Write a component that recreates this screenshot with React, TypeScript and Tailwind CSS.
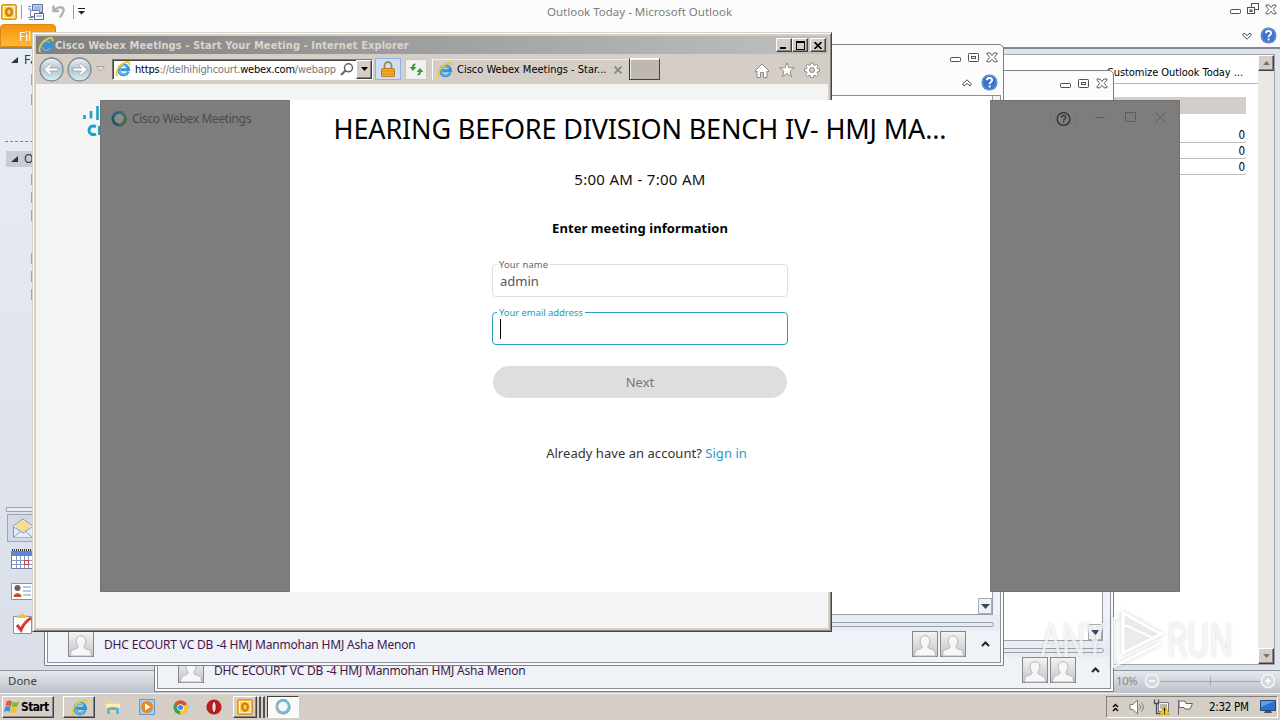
import type { ReactNode } from 'react';
import clsx from 'clsx';

const raised =
  'border border-t-white border-l-white border-r-[#404040] border-b-[#404040] shadow-[inset_-1px_-1px_0_#8a8580] bg-[#d5cec7]';

function IeLogo({ size = 16 }: { size?: number }) {
  return (
    <svg width={size} height={size} viewBox="0 0 16 16" fill="none">
      <path d="M13.2 10.8A5 5 0 1 1 13.6 8.8H5.5" stroke="#3394d8" strokeWidth="2.9" />
      <path d="M12.6 10.8A4.6 4.6 0 0 1 3.900 9.500M4.500 6.500A4.500 4.500 0 0 1 12 5.800" stroke="#7fcdf4" strokeWidth="1" />
      <path d="M2.6 14.900C-1 13.500 3.500 3.500 11 1.200c3-.8 4.200.8 3.300 3" stroke="#f0ca2a" strokeWidth="1.800" />
    </svg>
  );
}

function WebexBall({ size = 16, dim = false }: { size?: number; dim?: boolean }) {
  return (
    <svg width={size} height={size} viewBox="0 0 16 16">
      <circle cx="8" cy="8" r="7.6" fill={dim ? '#2f5360' : '#8fb5b8'} />
      <path d="M8 .4a7.6 7.6 0 0 1 0 15.2z" fill={dim ? '#4c6750' : '#6fb9c8'} />
      <path d="M1.5 5A7.5 7.5 0 0 1 12 1.6" stroke={dim ? '#2b6f8e' : '#67b6dc'} strokeWidth="1.6" fill="none" />
      <circle cx="8" cy="7.6" r="4.8" fill={dim ? '#8c8e8e' : '#eef8fa'} />
    </svg>
  );
}

function HelpBall() {
  return (
    <svg width="17" height="17" viewBox="0 0 17 17">
      <circle cx="8.5" cy="8.5" r="8" fill="#3f74c9" />
      <circle cx="8.5" cy="8.5" r="7" fill="none" stroke="#6d9be0" />
      <path d="M5.9 6.3c.2-3.3 5.4-3 5.2 0-.1 1.8-2.5 1.7-2.5 3.9M8.6 11.6v2" stroke="#fff" strokeWidth="1.9" fill="none" />
    </svg>
  );
}

function OutlookLogo() {
  return (
    <svg width="16" height="16" viewBox="0 0 16 16">
      <rect x=".5" y=".5" width="15" height="15" rx="1.5" fill="#f4b52c" stroke="#d59a2a" />
      <rect x="2.5" y="2.5" width="11" height="11" fill="#fbd35e" stroke="#fff0bd" />
      <ellipse cx="8" cy="8" rx="2.8" ry="3.7" fill="none" stroke="#cf7a10" strokeWidth="2.2" />
    </svg>
  );
}

function CaptionMin() {
  return (
    <svg width="11" height="11" viewBox="0 0 11 11" fill="#fff" stroke="#4a4e58">
      <rect x=".5" y="5.5" width="10" height="4" rx=".8" />
    </svg>
  );
}

function CaptionMax() {
  return (
    <svg width="11" height="11" viewBox="0 0 11 11" fill="#fff" stroke="#4a4e58">
      <rect x=".5" y="1.5" width="10" height="8" rx=".8" />
      <rect x="3.5" y="4.5" width="4" height="2" />
    </svg>
  );
}

function CaptionRestore() {
  return (
    <svg width="12" height="12" viewBox="0 0 12 12" fill="#fff" stroke="#4a4e58">
      <rect x="4.5" y=".5" width="7" height="6" />
      <rect x=".5" y="4.5" width="7" height="6" />
      <rect x="3" y="7" width="2" height="1.5" />
    </svg>
  );
}

function CaptionClose() {
  return (
    <svg width="12" height="11" viewBox="0 0 12 11" fill="#fff" stroke="#4a4e58" strokeWidth=".9">
      <path d="M1 1h3l2 2.5L8 1h3v1L8.3 5.3 11 8.8v1H8L6 7.3 4 9.8H1v-1l2.7-3.5L1 2z" />
    </svg>
  );
}

function Chevron({ flip = false }: { flip?: boolean }) {
  return (
    <svg width="10" height="8" viewBox="0 0 10 8" className={clsx(flip && 'rotate-180')}>
      <path d="M5 .8 9.3 5 8 7 5 4.5 2 7 .7 5z" fill="#fff" stroke="#4a4e58" />
    </svg>
  );
}

function Person() {
  return (
    <svg width="26" height="26" viewBox="0 0 26 26">
      <defs>
        <linearGradient id="person" x1="0" y1="0" x2="0" y2="1">
          <stop offset="0" stopColor="#f4f4f4" />
          <stop offset="1" stopColor="#c4c4c6" />
        </linearGradient>
      </defs>
      <rect x=".5" y=".5" width="25" height="25" fill="url(#person)" stroke="#85888d" />
      <path
        d="M2.5 25c0-5 1.5-6 5-7 2-.6 2.800-1.200 2.500-3-2-2.500-2-4-1.700-6.500.8-5 8.600-5 9.400 0 .3 2.500.3 4-1.700 6.500-.3 1.800.5 2.400 2.500 3 3.500 1 5 2 5 7z"
        fill="#f7f7f8"
        stroke="#b3b5b8"
      />
    </svg>
  );
}

function ScrollArrow({ up = false }: { up?: boolean }) {
  return (
    <div className={clsx('flex size-4 items-center justify-center', raised)}>
      <svg width="7" height="4" viewBox="0 0 7 4" className={clsx(!up && 'rotate-180')}>
        <path d="M3.5 0 7 4H0z" fill="#77736e" />
      </svg>
    </div>
  );
}

/* Outlook message window that sits behind the browser */
function MessageWindow({ className }: { className: string }) {
  return (
    <div className={clsx('absolute flex h-[622px] w-[960px] flex-col rounded-t-[5px] border border-[#7b8088] bg-[#fcfcfd]', className)}>
      <div className="flex h-[25px] items-center justify-end gap-[7px] pr-[5px]">
        <CaptionMin />
        <CaptionMax />
        <CaptionClose />
      </div>
      <div className="flex h-[25px] items-center justify-end gap-[9px] pr-[5px]">
        <Chevron />
        <HelpBall />
      </div>
      <div className="mx-[2px] mb-[2px] flex flex-1 flex-col border border-[#8b9099] bg-[#eff2f6]">
        <div className="mr-[7px] flex flex-1 items-end justify-end border-r border-b border-[#9a9fa8] bg-white">
          <div className="flex h-4 w-[14px] items-center justify-center border border-[#a9b0ac] bg-[#eef2f7]">
            <svg width="9" height="5" viewBox="0 0 9 5">
              <path d="M0 0h9L4.5 5z" fill="#3a4763" />
            </svg>
          </div>
        </div>
        <div className="flex h-4 items-start bg-[#e8edf3] pt-[7px] pr-[6px]">
          <div className="h-[5px] flex-1 rounded-r-sm border border-[#999fa8] bg-[#e6eaf1]" />
        </div>
        <div className="flex h-[31px] items-start pr-[10px] pl-[20px]">
          <Person />
          <span className="ml-[10px] font-['Noto_Sans','Open_Sans',sans-serif] text-[12px] leading-[27px] tracking-[-0.18px] whitespace-nowrap text-[#43164b]">
            DHC ECOURT VC DB -4 HMJ Manmohan HMJ Asha Menon
          </span>
          <div className="ml-auto flex gap-[2px]">
            <Person />
            <Person />
          </div>
          <svg width="9" height="6" viewBox="0 0 9 6" className="mt-[10px] ml-[15px]">
            <path d="M1 5l3.5-3.5L8 5" fill="none" stroke="#20242c" strokeWidth="2" />
          </svg>
        </div>
      </div>
    </div>
  );
}

function NavStub({ className }: { className: string }) {
  return <div className={clsx('ml-[31px] h-[11px] w-[2px] bg-[#a2a5aa]', className)} />;
}

function NavHeading({ children, active = false }: { children: ReactNode; active?: boolean }) {
  return (
    <div className={clsx('ml-[6px] flex h-4 items-center pl-[5px] text-[12px] text-[#333]', active && 'bg-[#c7ccd6]')}>
      <svg width="8" height="7" viewBox="0 0 8 7">
        <path d="M7 0v6H0z" fill="#333" />
      </svg>
      <span className="ml-[5px]">{children}</span>
    </div>
  );
}

function OutlookWindow() {
  return (
    <div className="absolute inset-x-0 top-0 flex h-[694px] flex-col overflow-hidden bg-[#fcfcfd] font-['Noto_Sans','Open_Sans',sans-serif]">
      <div className="flex h-6 shrink-0 items-center pr-[3px] pb-px pl-px">
        <OutlookLogo />
        <div className="ml-1 h-[14px] w-px bg-[#9b9b9b]" />
        <svg width="16" height="16" viewBox="0 0 16 16" className="ml-[6px]">
          <path d="M4.5.5h10v8h-10z" fill="#c9d8f0" stroke="#5c7197" />
          <path d="M6 3h7M6 5h7" stroke="#7f9bc9" />
          <path d="M2.5 6.500h9v6h-9z" fill="#fff" stroke="#6f87b0" />
          <path d="M6.500 9.500h9v6h-9z" fill="#fff" stroke="#4f638b" />
          <path d="M8 12h6M0 2.500h3M0 5h3M0 13.500h5M1 15.500h4M13 7.500h2" fill="none" stroke="#6f87b0" />
        </svg>
        <svg width="13" height="13" viewBox="0 0 13 13" className="ml-[8px]" fill="none" stroke="#b0b0b0" strokeWidth="2.4">
          <path d="M1.500.5v5.500H7M2 5.500c2.500-3.500 8.500-4.500 9.500-1 .6 3-1.500 4-3.500 8" />
        </svg>
        <div className="ml-[8px] h-[14px] w-px bg-[#9b9b9b]" />
        <svg width="7" height="7" viewBox="0 0 7 7" className="ml-1">
          <path d="M0 0h7v1H0zM0 3h7L3.5 6.5z" fill="#222" />
        </svg>
        <span className="ml-[462px] text-[11.5px] whitespace-nowrap text-[#7d7d7d]">
          Outlook Today - Microsoft Outlook
        </span>
        <div className="ml-auto flex items-center gap-[6px] pb-[5px]">
          <CaptionMin />
          <CaptionRestore />
          <CaptionClose />
        </div>
      </div>
      <div className="flex h-[23px] shrink-0 items-start justify-between pr-[3px]">
        <div className="h-[23px] w-14 rounded-t-[4px] border border-[#d98a14] bg-linear-to-b from-[#f4940c] to-[#ffb733] pl-[18px] text-[12px] leading-[23px] text-white">
          File
        </div>
        <div className="mt-[3px] flex items-center gap-2">
          <Chevron flip />
          <HelpBall />
        </div>
      </div>
      <div className="h-[2px] shrink-0 bg-[#858b92]" />
      <div className="flex flex-1 bg-[#dfe4eb]">
        <div className="flex w-[154px] flex-col bg-linear-to-b from-[#e9edf3] to-[#d9dee8] pt-[3px]">
          <NavHeading>Favorites</NavHeading>
          <NavStub className="mt-[6px]" />
          <NavStub className="mt-[9px]" />
          <div className="mt-[36px] ml-[5px] border-t border-dashed border-[#7f858e]" />
          <div className="h-[9px]" />
          <NavHeading active>Outlook</NavHeading>
          <NavStub className="mt-[7px]" />
          <NavStub className="mt-[7px]" />
          <NavStub className="mt-[7px]" />
          <NavStub className="mt-[32px]" />
          <NavStub className="mt-[7px]" />
          <NavStub className="mt-[7px]" />
          <div className="mt-[207px] ml-[6px] h-[5px] border border-[#9ea4af] bg-[#e9edf3]" />
          <div className="mt-[2px] ml-[7px] flex h-7 items-center border border-[#9ea4af] bg-[#d3d9e5] pl-[5px]">
            <svg width="20" height="20" viewBox="0 0 20 20">
              <path d="M.5 8 10 1l9.5 7v11H.5z" fill="#f4f8fd" stroke="#7e95b8" />
              <path d="M3 7 10 2l7 5v4l-7 4-7-4z" fill="#f8dc92" />
              <path d="m1 9 9 6 9-6v10H1z" fill="#e3eefa" />
              <path d="m1 19 7-6m11 6-7-6M1 9l9 6 9-6" fill="none" stroke="#7e9fcf" />
            </svg>
          </div>
          <svg width="22" height="20" viewBox="0 0 22 20" className="mt-[7px] ml-[11px]">
            <path d="M.5 2.5h21v17H.5z" fill="#fff" stroke="#6d7fae" />
            <path d="M1 3h20v4H1z" fill="#5b8ad4" />
            <path d="M1 11.5h20M1 15.5h20M5.5 7v12M9.5 7v12M13.5 7v12M17.5 7v12" stroke="#8598c7" />
            <path d="M13.5 11.5h4v4h-4z" fill="none" stroke="#c83a34" />
            <path d="M1 1h20" stroke="#333" strokeWidth="2" strokeDasharray="1 1" />
          </svg>
          <svg width="22" height="18" viewBox="0 0 22 18" className="mt-[14px] ml-[11px]">
            <path d="M.5.5h21v16H.5z" fill="#fff" stroke="#8793ac" />
            <path d="M12 4h8M12 8h8M12 12h8" stroke="#6e92d4" />
            <circle cx="6.5" cy="5" r="3" fill="#6e605a" />
            <path d="M2.5 14c0-5 8-5 8 0z" fill="#c24c2c" />
          </svg>
          <svg width="19" height="21" viewBox="0 0 19 21" className="mt-[12px] ml-[13px]">
            <path d="M.5 3.5h18v17H.5z" fill="#fff" stroke="#8793ac" />
            <path d="M4 2h3l2-2 2 2h3v3H4z" fill="#ecc24a" />
            <path d="m4 12 4 5c2-5 5-9 10-12" fill="none" stroke="#dc3a30" strokeWidth="3" />
          </svg>
        </div>
        <div className="mt-[5px] mr-[5px] mb-[5px] flex flex-1 border border-[#a0a5ad] bg-white">
          <div className="flex flex-1 flex-col">
            <div className="flex h-[29px] items-center justify-end border-b border-[#b9b5b1] pt-[8px] pr-[15px] font-['DejaVu_Sans_Condensed','DejaVu_Sans',sans-serif] text-[11px] tracking-[-0.06px] text-black">
              <span className="underline">C</span>ustomize Outlook Today ...
            </div>
            <div className="mt-[13px] mr-[12px] h-[17px] bg-[#d5cdc7]" />
            <div className="mt-[13px] mr-[12px] font-['DejaVu_Sans_Condensed','DejaVu_Sans',sans-serif] text-[11.5px] text-black">
              <div className="h-4 border-b border-[#c3bfbb] pr-px text-right leading-[17px]">0</div>
              <div className="h-4 border-b border-[#c3bfbb] pr-px text-right leading-[17px]">0</div>
              <div className="h-4 border-b border-[#c3bfbb] pr-px text-right leading-[17px]">0</div>
            </div>
          </div>
          <div className="flex w-4 flex-col justify-between bg-[#eae7e3]">
            <ScrollArrow up />
            <ScrollArrow />
          </div>
        </div>
      </div>
      <div className="flex h-[24px] shrink-0 items-center border-t border-[#8f959d] bg-linear-to-b from-[#e6e9ee] to-[#b9bfc8] pr-[4px] pb-[3px] pl-[8px] text-[11.5px] text-[#3b3f46]">
        Done
        <span className="ml-auto tracking-[-0.6px] text-[#83888f]">10%</span>
        <svg width="132" height="16" viewBox="0 0 132 16" className="ml-[7px]">
          <path d="M16 8.5h100M66.5 4v8" stroke="#a0a6ae" />
          <g fill="#d4d8de" stroke="#f4f5f7" strokeWidth="1.5">
            <circle cx="8" cy="8" r="6.5" />
            <circle cx="124" cy="8" r="6.5" />
          </g>
          <path d="M5 8h6M121 8h6M124 5v6" stroke="#fff" strokeWidth="1.5" />
        </svg>
      </div>
    </div>
  );
}

function ArrowBall({ right = false }: { right?: boolean }) {
  return (
    <svg width="25" height="25" viewBox="0 0 25 25" className={clsx(right && 'rotate-y-180')}>
      <defs>
        <linearGradient id="ball" x1="0" y1="0" x2="0" y2="1">
          <stop offset="0" stopColor="#eef1f4" />
          <stop offset=".5" stopColor="#b7c3d0" />
          <stop offset="1" stopColor="#d6f1f8" />
        </linearGradient>
      </defs>
      <circle cx="12.5" cy="12.5" r="11.5" fill="url(#ball)" stroke="#7d868e" strokeWidth="1.3" />
      <path d="m5 12.5 6-6 2 2-2.500 2.500h8.500v3h-8.500l2.500 2.500-2 2z" fill="#fff" stroke="#8fa0b3" strokeWidth=".8" />
    </svg>
  );
}

function BrowserWindow() {
  return (
    <div className="absolute top-8 left-8 flex h-[600px] w-[800px] flex-col border border-t-[#d5cec7] border-r-[#45423f] border-b-[#45423f] border-l-[#d5cec7] bg-[#d5cec7] p-[3px] font-['DejaVu_Sans_Condensed','DejaVu_Sans',sans-serif] shadow-[inset_1px_1px_0_#fff,inset_-1px_-1px_0_#8a8580]">
      <div className="flex h-[18px] shrink-0 items-center bg-linear-to-r from-[#808080] to-[#c0c0c0] pr-[2px] pl-[2px]">
        <IeLogo />
        <span className="ml-px pt-[2px] text-[11px] font-bold tracking-[0.09px] whitespace-nowrap text-[#dad5cf]">
          Cisco Webex Meetings - Start Your Meeting - Internet Explorer
        </span>
        <div className="ml-auto flex">
          <div className={clsx('flex h-[14px] w-4 items-end pb-[2px] pl-[3px]', raised)}>
            <div className="h-[2px] w-[6px] bg-black" />
          </div>
          <div className={clsx('flex h-[14px] w-4 items-center justify-center', raised)}>
            <div className="h-[9px] w-[9px] border border-t-2 border-black" />
          </div>
          <div className={clsx('ml-[2px] flex h-[14px] w-4 items-center justify-center', raised)}>
            <svg width="8" height="7" viewBox="0 0 8 7">
              <path d="m.5 0 7 7m0-7-7 7" stroke="#000" strokeWidth="1.6" />
            </svg>
          </div>
        </div>
      </div>
      <div className="flex h-[30px] shrink-0 items-center pr-[8px] pl-[3px]">
        <ArrowBall />
        <div className="ml-[3px]">
          <ArrowBall right />
        </div>
        <svg width="9" height="6" viewBox="0 0 9 6" className="ml-[4px]">
          <path d="M.5.5h8L4.5 5z" fill="#e8e4df" stroke="#aaa49e" />
        </svg>
        <div className="ml-[7px] flex h-[21px] w-[261px] items-center border border-t-[#7b7671] border-r-white border-b-white border-l-[#7b7671] bg-white pl-[2px] text-[11px] shadow-[inset_1px_1px_0_#45423f]">
          <IeLogo />
          <span className="ml-[4px] w-[202px] pt-[2px] tracking-[-0.21px] whitespace-nowrap text-[#777]">
            <span className="text-black">https</span>://delhihighcourt.<span className="text-black">webex.com</span>/webapp
          </span>
          <svg width="14" height="13" viewBox="0 0 14 13" fill="none" stroke="#666" strokeWidth="1.5" className="ml-[3px]">
            <circle cx="8.5" cy="4.8" r="4" />
            <path d="M5.5 7.5 1 12" strokeWidth="2.2" />
          </svg>
          <div className={clsx('ml-[2px] flex h-[19px] w-4 items-center justify-center', raised)}>
            <svg width="7" height="4" viewBox="0 0 7 4">
              <path d="M0 0h7L3.5 4z" />
            </svg>
          </div>
        </div>
        <div className="ml-[2px] flex h-[22px] w-[26px] items-center justify-center border border-[#8eb4e6] bg-[#cfe0f6]">
          <svg width="14" height="16" viewBox="0 0 14 16">
            <path d="M3.5 8V4.5a3.5 3.5 0 0 1 7 0V8" fill="none" stroke="#9c8756" strokeWidth="1.8" />
            <rect x=".5" y="7.5" width="13" height="8" rx="1" fill="#f3ab2b" stroke="#c07d15" />
            <path d="M1 10h12M1 13h12" stroke="#d48d1d" />
          </svg>
        </div>
        <div className="ml-1 flex h-[21px] w-[22px] items-center justify-center border border-[#c8c6c3] bg-[#f1f1f1]">
          <svg width="15" height="13" viewBox="0 0 15 13" fill="#3a9a3c">
            <path d="M6.5.5C4 .5 3 2 3 4H.5L4 8l3.5-4H5.200c0-1 .4-1.700 1.300-1.900zM8.500 12.500c2.500 0 3.500-1.500 3.500-3.500h2.500L11 5 7.500 9h2.300c0 1-.4 1.700-1.300 1.900z" />
          </svg>
        </div>
        <div className="ml-[5px] flex h-[21px] w-[197px] items-center border border-b-0 border-t-[#f0ece8] border-r-transparent border-l-white pl-[4px] text-[11px] text-black">
          <IeLogo />
          <span className="ml-[4px] pt-[2px] whitespace-nowrap">Cisco Webex Meetings - Star...</span>
          <svg width="8" height="8" viewBox="0 0 8 8" className="mr-[6px] ml-auto">
            <path d="m.5.5 7 7m0-7-7 7" stroke="#888" strokeWidth="1.8" />
          </svg>
        </div>
        <div className="h-[22px] w-[31px] border border-t-white border-r-[#45423f] border-b-[#45423f] border-l-[#333] bg-[#bfb8b1] shadow-[inset_1px_1px_0_#eee]" />
        <svg width="16" height="16" viewBox="0 0 16 16" className="mt-[3px] ml-auto" fill="#fff" stroke="#8e8a87">
          <path d="M8 1 15 8l-1 1-1-1v6.5H9.5v-5h-3v5H3V8L2 9 1 8z" />
        </svg>
        <svg width="16" height="16" viewBox="0 0 16 16" className="mt-[2px] ml-[9px]" fill="#fff" stroke="#8e8a87">
          <path d="m8 .8 2 5h5.3l-4.2 3.4 1.5 5.6L8 11.5l-4.6 3.3 1.5-5.6L.7 5.8H6z" />
        </svg>
        <svg width="16" height="16" viewBox="0 0 16 16" className="mt-px ml-[9px]" stroke="#8e8a87">
          <path
            d="M6.7 1h2.6l.4 2 1 .4 1.8-1.2 1.7 1.8-1.2 1.7.5 1 2 .4v2.3l-2 .4-.5 1.2 1.2 1.6-1.7 1.8-1.8-1.2-1 .4-.4 2H6.7l-.4-2-1-.4-1.8 1.2-1.7-1.8L3 11.2 2.5 9.8l-2-.4V7.1l2-.4.5-1L1.8 4l1.7-1.8 1.8 1.2 1-.4z"
            fill="#fff"
          />
          <circle cx="8" cy="8" r="2.5" fill="#d5cec7" />
        </svg>
      </div>
      <div className="flex flex-1 items-start bg-[#f4f4f4]">
        <svg width="40" height="30" viewBox="0 0 40 30" className="mt-[22px] ml-[47px]" fill="none" stroke="#1ba3c6" strokeWidth="2.6">
          <path d="M1.5 9v4M8 5v7.5M14.5 0v14" />
          <path d="M13 20.5c-4-1.5-7 .5-7 3.8s3 5.3 7 3.8M16.5 20v9" strokeWidth="3" />
        </svg>
      </div>
    </div>
  );
}

function Field({ label, value, focused = false }: { label: string; value?: string; focused?: boolean }) {
  return (
    <div
      className={clsx(
        'relative flex h-[33px] w-[296px] items-center rounded-[4px] border pl-[7px]',
        focused ? 'border-[#2a9fb8]' : 'border-[#dedede]',
      )}
    >
      <span
        className={clsx(
          'absolute -top-[7px] left-[4px] bg-white px-[2px] text-[9.5px] leading-[13px] whitespace-nowrap',
          focused ? 'tracking-[-0.08px] text-[#1f9ab5]' : 'tracking-[0.1px] text-[#666]',
        )}
      >
        {label}
      </span>
      {focused ? <span className="h-5 w-px bg-black" /> : <span className="pt-[2px] text-[13px] text-[#555]">{value}</span>}
    </div>
  );
}

function MeetingDialog() {
  return (
    <div className="absolute top-[100px] left-[100px] flex h-[492px] w-[1080px] bg-[#7d7d7d] font-['Noto_Sans','Open_Sans',sans-serif]">
      <div className="flex w-[190px] items-start border border-r-0 border-[#727272] pt-[10px] pl-[10px]">
        <WebexBall dim />
        <span className="ml-[5px] text-[12px] leading-[16px] tracking-[-0.35px] whitespace-nowrap text-[#4b4b4b]">
          Cisco Webex Meetings
        </span>
      </div>
      <div className="flex w-[700px] flex-col items-center bg-white">
        <h1 className="mt-[11px] h-9 text-[27px] leading-9 tracking-[-0.15px] whitespace-nowrap text-black">
          HEARING BEFORE DIVISION BENCH IV- HMJ MA...
        </h1>
        <p className="mt-[22px] text-[15px] leading-5 tracking-[0.3px] text-[#111]">5:00 AM - 7:00 AM</p>
        <h2 className="mt-[29px] text-[13px] leading-5 font-bold tracking-[0.08px] text-black">Enter meeting information</h2>
        <div className="mt-[26px] flex flex-col gap-[15px]">
          <Field label="Your name" value="admin" />
          <Field label="Your email address" focused />
        </div>
        <button className="mt-[21px] h-8 w-[294px] rounded-full bg-[#dedede] pt-[2px] text-[13px] text-[#777]">Next</button>
        <p className="mt-[45px] ml-[13px] text-[13px] leading-5 tracking-[0.04px] whitespace-nowrap text-[#333]">
          Already have an account? <span className="text-[#1f9ec4]">Sign in</span>
        </p>
      </div>
      <div className="flex flex-1 items-start justify-end border border-l-0 border-[#727272] pt-[9px] pr-[12px]">
        <div className="mr-[16px] flex h-[18px] w-[27px] items-center justify-center">
          <div className="h-[10px] w-px bg-[#747474]" />
          <svg width="16" height="16" viewBox="0 0 16 16" fill="none" stroke="#2e2e2e" strokeWidth="1.3" className="mx-[5px]">
            <circle cx="8" cy="8" r="6.8" />
            <path d="M5.9 6.5c0-2.8 4.3-2.8 4.3-.1C10.2 8 8 7.8 8 9.5M8 10.7V12" />
          </svg>
          <div className="h-[10px] w-px bg-[#747474]" />
        </div>
        <svg width="74" height="14" viewBox="0 0 74 14" fill="none" stroke="#5c5c5c" className="mt-px">
          <path d="M2 6.5h10M32.5 1.5h10v9h-10zM62.5 1.5l10 10m0-10-10 10" />
        </svg>
      </div>
    </div>
  );
}

function Taskbar() {
  return (
    <div className="absolute inset-x-0 bottom-0 flex h-[27px] items-center border-t border-[#f7f5f3] bg-[#d5cec7] pr-[2px] pl-[2px] font-['DejaVu_Sans_Condensed','DejaVu_Sans',sans-serif]">
      <div className={clsx('flex h-[22px] w-[52px] items-center pl-px', raised)}>
        <svg width="16" height="16" viewBox="0 0 16 16">
          <path d="M2.5 2.5C4.5 1 6 1.5 8 2.5L6.8 7.2c-2-1-3.5-1-5.3 0z" fill="#e8582c" />
          <path d="M8.8 2.8c2 1 4 1 6.2-.3l-1.3 4.8c-2 1.2-4 1.2-6 .3z" fill="#7fba3c" />
          <path d="M1.3 8.2c2-1.2 3.3-1 5.3-.2l-1.2 4.8c-2-1-3.5-1-5.4.2z" fill="#3f8ddc" />
          <path d="M7.4 8.5c2 1 4 1 6 0l-1.3 4.8c-2 1-4 1-6 0z" fill="#f6c12c" />
        </svg>
        <span className="ml-px text-[12px] font-bold tracking-[-0.65px] text-black">Start</span>
      </div>
      <div className={clsx('ml-[9px] flex h-[22px] w-8 items-center justify-center', raised)}>
        <IeLogo size={17} />
      </div>
      <svg width="16" height="16" viewBox="0 0 16 16" className="ml-[10px]">
        <path d="M1 2h6l1 2h7v9H1z" fill="#f3d878" />
        <path d="M1 5h14v4H1z" fill="#fbeeb5" />
        <path d="M2 15V9.5C4 7.5 12 7.5 14 9.5V15h-3v-4H5v4z" fill="#5fb4e0" />
      </svg>
      <svg width="16" height="16" viewBox="0 0 16 16" className="ml-[18px]">
        <rect x=".5" y=".5" width="15" height="15" fill="#a5cdf0" stroke="#5b9bd6" />
        <circle cx="8" cy="8" r="6" fill="#f0851e" />
        <path d="m6 4.5 5.5 3.5L6 11.5z" fill="#fff" />
      </svg>
      <svg width="15" height="15" viewBox="0 0 16 16" className="ml-[18px]">
        <circle cx="8" cy="8" r="7.5" fill="#35a352" />
        <path d="M8 8 1.5 4.2A7.5 7.5 0 0 1 14.6 4.5z" fill="#dd4b39" />
        <path d="M8 8l6.6-3.5A7.5 7.5 0 0 1 7.5 15.5z" fill="#fbc92e" />
        <circle cx="8" cy="8" r="3.5" fill="#fff" />
        <circle cx="8" cy="8" r="2.7" fill="#3f86ea" />
      </svg>
      <svg width="16" height="16" viewBox="0 0 16 16" className="ml-[18px]">
        <circle cx="8" cy="8" r="7.6" fill="#bd1b1e" />
        <ellipse cx="8" cy="8" rx="2.2" ry="5.6" fill="#e9dedd" stroke="#8c1013" strokeWidth="1" />
      </svg>
      <div className={clsx('ml-[11px] flex h-[22px] w-[24px] items-center justify-center', raised)}>
        <OutlookLogo />
      </div>
      <div className="h-[22px] w-[4px] border-t border-r-2 border-t-white border-r-[#55514d]" />
      <div className="h-[22px] w-[4px] border-t border-r-2 border-t-white border-r-[#55514d]" />
      <div className="ml-[2px] flex h-[22px] w-8 items-center justify-center border border-t-[#45423f] border-r-white border-b-white border-l-[#45423f] bg-[#fbfaf9]">
        <WebexBall />
      </div>
      <div className="ml-auto flex h-[22px] w-[172px] items-center border border-t-[#85807b] border-r-white border-b-white border-l-[#85807b] pl-[5px]">
        <svg width="7" height="9" viewBox="0 0 7 9" fill="none" stroke="#000" strokeWidth="1.4">
          <path d="m1 4 2.5-2.5L6 4M1 8l2.5-2.5L6 8" />
        </svg>
        <svg width="17" height="16" viewBox="0 0 17 16" fill="none" stroke="#777" className="ml-[10px]">
          <path d="M1 5.5h3L8.5 1v14L4 10.5H1z" fill="#fff" />
          <path d="M10.5 5.5c1.3 1.5 1.3 3.5 0 5M12.5 3.5c2.3 2.5 2.3 6.5 0 9" />
        </svg>
        <svg width="17" height="16" viewBox="0 0 17 16" className="ml-[7px]">
          <path d="M5.5 3.5h10v9h-10z" fill="#f2f2f0" stroke="#777" />
          <path d="M7 5h7v5H7z" fill="#b9bcbb" />
          <path d="M1.5.5v4h4v-4M3.5 4.5v10h4" fill="none" stroke="#4e4e4e" strokeWidth="1.3" />
          <path d="m11.5 6 5 9.5h-10z" fill="#f8cb1d" stroke="#b9930d" strokeWidth=".6" />
          <path d="M11.5 9v3.5m0 1v1.2" stroke="#000" strokeWidth="1.2" />
        </svg>
        <svg width="17" height="16" viewBox="0 0 17 16" fill="#fff" stroke="#666" className="ml-[7px]">
          <path d="M1.5 1v15" />
          <path d="M2 2h6l1 2.5h6.5L13 10H8L7 8.5H2z" />
        </svg>
        <span className="ml-[15px] pt-px text-[11.5px] tracking-[-0.3px] whitespace-nowrap text-black">2:32 PM</span>
        <svg width="16" height="14" viewBox="0 0 16 14" className="mr-px ml-auto">
          <path d="M.5.5h15v10H.5z" fill="#2b72d0" stroke="#27496f" />
          <path d="M1 1h14L1 7z" fill="#5f9ee8" />
          <path d="M5 11h6l1 2H4z" fill="#455363" />
        </svg>
      </div>
    </div>
  );
}

function Watermark() {
  return (
    <div className="absolute top-[607px] left-[1040px] flex h-[66px] items-center font-['Roboto','Liberation_Sans',sans-serif] text-[49px] leading-none text-white/70 [text-shadow:0_0_3px_rgba(120,125,130,0.35)]">
      <span className="w-[66px] origin-left scale-x-[0.68] whitespace-nowrap">ANY</span>
      <svg width="60" height="66" viewBox="0 0 60 66" fill="none" stroke="#fff" opacity=".75" className="drop-shadow-[0_0_2px_rgba(120,125,130,0.5)]">
        <path d="M17 6v40L55 27z" fill="#eceef0" fillOpacity=".6" strokeWidth="3" />
        <path d="M19 18l30 14" strokeWidth="2" />
        <path d="M13 9 7 12v48l48-24" strokeWidth="2.5" />
      </svg>
      <span className="ml-[1px] w-[66px] origin-left scale-x-[0.68] whitespace-nowrap">RUN</span>
    </div>
  );
}

export default function App() {
  return (
    <div className="relative h-[720px] w-[1280px] overflow-hidden bg-[#d5cec7]">
      <OutlookWindow />
      <MessageWindow className="top-[70px] left-[154px]" />
      <MessageWindow className="top-[44px] left-[44px]" />
      <BrowserWindow />
      <MeetingDialog />
      <Taskbar />
      <Watermark />
    </div>
  );
}
